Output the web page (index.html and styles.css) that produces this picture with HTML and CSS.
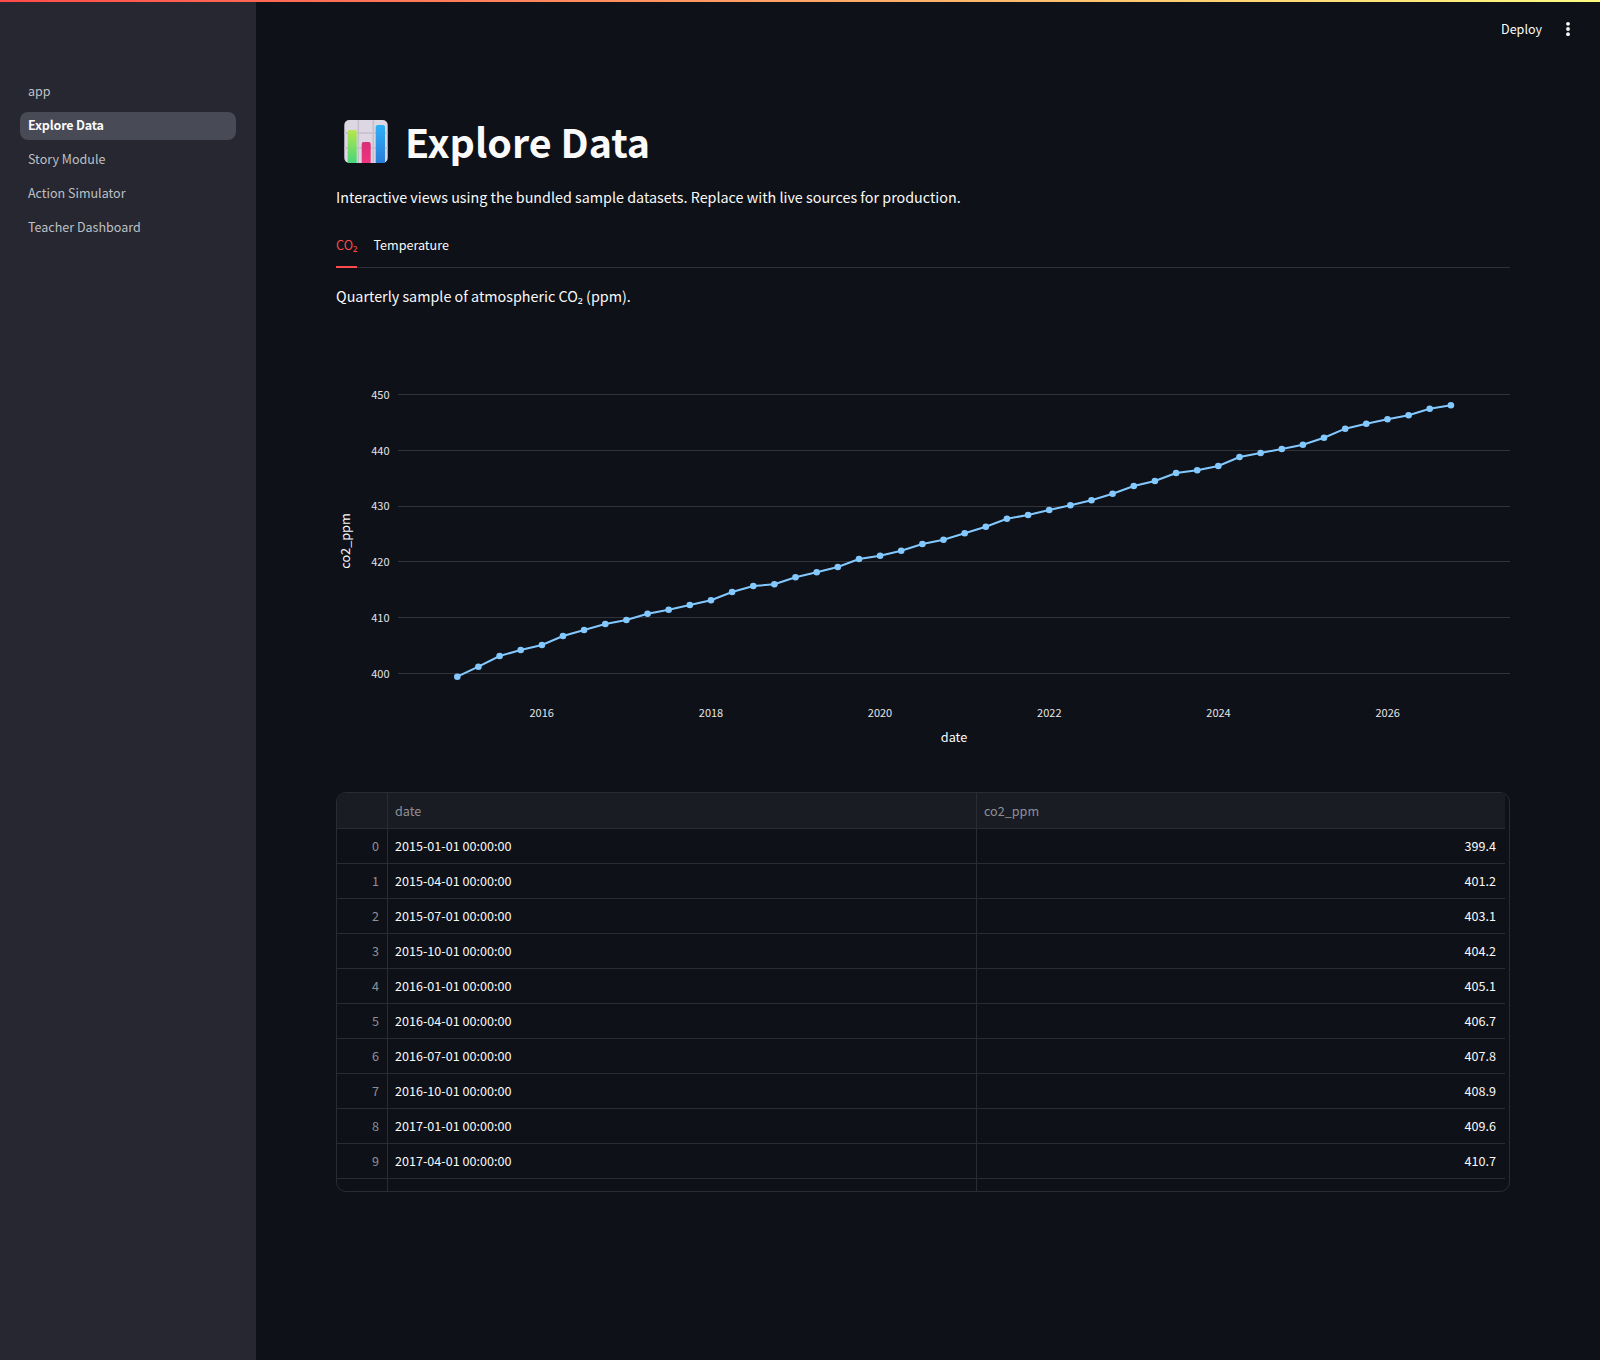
FILE: index.html
```html
<!DOCTYPE html>
<html lang="en">
<head>
<meta charset="utf-8">
<title>Explore Data</title>
<link rel="stylesheet" href="styles.css">
</head>
<body>
<div class="topbar"></div>
<div class="app">
  <aside class="sidebar">
    <nav class="nav">
      <a class="nav-item">app</a>
      <a class="nav-item active">Explore Data</a>
      <a class="nav-item">Story Module</a>
      <a class="nav-item">Action Simulator</a>
      <a class="nav-item">Teacher Dashboard</a>
    </nav>
  </aside>
  <main class="main">
    <header class="toolbar">
      <span class="deploy">Deploy</span>
      <svg class="kebab" width="16" height="16" viewBox="0 0 16 16" aria-hidden="true"><circle cx="8" cy="2.8" r="1.9"/><circle cx="8" cy="8" r="1.9"/><circle cx="8" cy="13.2" r="1.9"/></svg>
    </header>
    <section class="content">
      <div class="title-row">
        <svg class="emoji" width="44" height="44" viewBox="0 0 44 44" aria-hidden="true">
          <defs>
            <linearGradient id="gG" x1="0" y1="0" x2="0" y2="1"><stop offset="0" stop-color="#b9e64c"/><stop offset="1" stop-color="#45d67c"/></linearGradient>
            <linearGradient id="gP" x1="0" y1="0" x2="0" y2="1"><stop offset="0" stop-color="#d92f78"/><stop offset="1" stop-color="#f0347f"/></linearGradient>
            <linearGradient id="gB" x1="0" y1="0" x2="0" y2="1"><stop offset="0" stop-color="#2fb0f8"/><stop offset="1" stop-color="#2a7dd8"/></linearGradient>
          </defs>
          <rect x="0.3" y="0" width="43.4" height="43" rx="5" fill="#dcd7e2"/>
          <path d="M14.3 0V43M29.3 0V43M0.3 13H43.7M0.3 28H43.7" stroke="#c4bfcb" stroke-width="1.6" fill="none"/>
          <path d="M3.7 43V12a2 2 0 0 1 2-2h5a2 2 0 0 1 2 2V43z" fill="url(#gG)"/>
          <path d="M17.7 43V24a2 2 0 0 1 2-2h5a2 2 0 0 1 2 2V43z" fill="url(#gP)"/>
          <path d="M31.7 43V7a2 2 0 0 1 2-2h5.3a2 2 0 0 1 2 2V43z" fill="url(#gB)"/>
        </svg>
        <h1 class="title">Explore Data</h1>
      </div>
      <p class="lead">Interactive views using the bundled sample datasets. Replace with live sources for production.</p>
      <div class="tabs">
        <span class="tab selected">CO₂</span>
        <span class="tab">Temperature</span>
      </div>
      <p class="caption">Quarterly sample of atmospheric CO₂ (ppm).</p>
      <svg class="chart" width="1174" height="440" viewBox="336 340 1174 440" role="img" aria-label="CO2 line chart">
        <g class="grid">
          <line x1="398" x2="1510" y1="394.5" y2="394.5"/>
          <line x1="398" x2="1510" y1="450.5" y2="450.5"/>
          <line x1="398" x2="1510" y1="506.5" y2="506.5"/>
          <line x1="398" x2="1510" y1="561.5" y2="561.5"/>
          <line x1="398" x2="1510" y1="617.5" y2="617.5"/>
          <line x1="398" x2="1510" y1="673.5" y2="673.5"/>
        </g>
        <g class="ticks-y">
          <text x="389.5" y="399">450</text>
          <text x="389.5" y="455">440</text>
          <text x="389.5" y="510">430</text>
          <text x="389.5" y="566">420</text>
          <text x="389.5" y="622">410</text>
          <text x="389.5" y="678">400</text>
        </g>
        <g class="ticks-x">
          <text x="541.7" y="717">2016</text>
          <text x="711" y="717">2018</text>
          <text x="880" y="717">2020</text>
          <text x="1049.3" y="717">2022</text>
          <text x="1218.5" y="717">2024</text>
          <text x="1387.7" y="717">2026</text>
        </g>
        <text class="axis-title" x="954" y="742">date</text>
        <text class="axis-title" transform="translate(350 541) rotate(-90)">co2_ppm</text>
        <polyline class="line" points="457.3,676.7 478.4,666.7 499.6,656 520.7,650 541.9,645 563,636 584.1,630 605.3,624 626.4,620 647.6,613.7 668.7,609.7 689.8,605 711,600.3 732.1,592 753.3,586 774.4,584.3 795.5,577.3 816.7,572.3 837.8,567 859,559 880.1,555.7 901.2,550.7 922.4,544 943.5,539.7 964.7,533.3 985.8,526.7 1006.9,518.7 1028.1,515 1049.2,510 1070.4,505.3 1091.5,500.3 1112.6,493.7 1133.8,486 1154.9,481 1176.1,473 1197.2,470.3 1218.3,466 1239.5,457 1260.6,453 1281.8,449 1302.9,444.7 1324,437.7 1345.2,428.7 1366.3,423.7 1387.5,419.3 1408.6,415.3 1429.7,408.7 1450.9,405.3"/>
        <g class="dots">
          <circle cx="457.3" cy="676.7" r="3.3"/><circle cx="478.4" cy="666.7" r="3.3"/><circle cx="499.6" cy="656" r="3.3"/><circle cx="520.7" cy="650" r="3.3"/><circle cx="541.9" cy="645" r="3.3"/><circle cx="563" cy="636" r="3.3"/><circle cx="584.1" cy="630" r="3.3"/><circle cx="605.3" cy="624" r="3.3"/><circle cx="626.4" cy="620" r="3.3"/><circle cx="647.6" cy="613.7" r="3.3"/><circle cx="668.7" cy="609.7" r="3.3"/><circle cx="689.8" cy="605" r="3.3"/><circle cx="711" cy="600.3" r="3.3"/><circle cx="732.1" cy="592" r="3.3"/><circle cx="753.3" cy="586" r="3.3"/><circle cx="774.4" cy="584.3" r="3.3"/><circle cx="795.5" cy="577.3" r="3.3"/><circle cx="816.7" cy="572.3" r="3.3"/><circle cx="837.8" cy="567" r="3.3"/><circle cx="859" cy="559" r="3.3"/><circle cx="880.1" cy="555.7" r="3.3"/><circle cx="901.2" cy="550.7" r="3.3"/><circle cx="922.4" cy="544" r="3.3"/><circle cx="943.5" cy="539.7" r="3.3"/><circle cx="964.7" cy="533.3" r="3.3"/><circle cx="985.8" cy="526.7" r="3.3"/><circle cx="1006.9" cy="518.7" r="3.3"/><circle cx="1028.1" cy="515" r="3.3"/><circle cx="1049.2" cy="510" r="3.3"/><circle cx="1070.4" cy="505.3" r="3.3"/><circle cx="1091.5" cy="500.3" r="3.3"/><circle cx="1112.6" cy="493.7" r="3.3"/><circle cx="1133.8" cy="486" r="3.3"/><circle cx="1154.9" cy="481" r="3.3"/><circle cx="1176.1" cy="473" r="3.3"/><circle cx="1197.2" cy="470.3" r="3.3"/><circle cx="1218.3" cy="466" r="3.3"/><circle cx="1239.5" cy="457" r="3.3"/><circle cx="1260.6" cy="453" r="3.3"/><circle cx="1281.8" cy="449" r="3.3"/><circle cx="1302.9" cy="444.7" r="3.3"/><circle cx="1324" cy="437.7" r="3.3"/><circle cx="1345.2" cy="428.7" r="3.3"/><circle cx="1366.3" cy="423.7" r="3.3"/><circle cx="1387.5" cy="419.3" r="3.3"/><circle cx="1408.6" cy="415.3" r="3.3"/><circle cx="1429.7" cy="408.7" r="3.3"/><circle cx="1450.9" cy="405.3" r="3.3"/>
        </g>
      </svg>
      <div class="table">
        <div class="row head"><div class="cell idx"></div><div class="cell">date</div><div class="cell">co2_ppm</div></div>
        <div class="row"><div class="cell idx">0</div><div class="cell">2015-01-01 00:00:00</div><div class="cell num">399.4</div></div>
        <div class="row"><div class="cell idx">1</div><div class="cell">2015-04-01 00:00:00</div><div class="cell num">401.2</div></div>
        <div class="row"><div class="cell idx">2</div><div class="cell">2015-07-01 00:00:00</div><div class="cell num">403.1</div></div>
        <div class="row"><div class="cell idx">3</div><div class="cell">2015-10-01 00:00:00</div><div class="cell num">404.2</div></div>
        <div class="row"><div class="cell idx">4</div><div class="cell">2016-01-01 00:00:00</div><div class="cell num">405.1</div></div>
        <div class="row"><div class="cell idx">5</div><div class="cell">2016-04-01 00:00:00</div><div class="cell num">406.7</div></div>
        <div class="row"><div class="cell idx">6</div><div class="cell">2016-07-01 00:00:00</div><div class="cell num">407.8</div></div>
        <div class="row"><div class="cell idx">7</div><div class="cell">2016-10-01 00:00:00</div><div class="cell num">408.9</div></div>
        <div class="row"><div class="cell idx">8</div><div class="cell">2017-01-01 00:00:00</div><div class="cell num">409.6</div></div>
        <div class="row"><div class="cell idx">9</div><div class="cell">2017-04-01 00:00:00</div><div class="cell num">410.7</div></div>
        <div class="row partial"><div class="cell idx"></div><div class="cell"></div><div class="cell"></div></div>
      </div>
    </section>
  </main>
</div>
</body>
</html>
```

FILE: styles.css
```css
* { box-sizing: border-box; }
html, body { margin: 0; height: 100%; }
body {
  display: flex;
  flex-direction: column;
  height: 1360px;
  overflow: hidden;
  background: #0e1117;
  color: #fafafa;
  font-family: "Noto Sans CJK SC", "Noto Sans", sans-serif;
  font-size: 14.34px;
}
.topbar {
  height: 2px;
  flex: none;
  background: linear-gradient(90deg, #ff4b4b, #fffd80);
}
.app { display: flex; flex: 1; min-height: 0; }

.sidebar {
  width: 256px;
  flex: none;
  background: #262730;
  padding: 76px 20px 0;
}
.nav { display: flex; flex-direction: column; gap: 6px; }
.nav-item {
  height: 28px;
  line-height: 26px;
  padding: 0 8px;
  border-radius: 8px;
  font-size: 12.53px;
  color: #bec0c6;
}
.nav-item.active {
  background: #484a56;
  color: #fafafa;
  font-weight: 700;
  letter-spacing: -0.17px;
}

.main { flex: 1; min-width: 0; padding: 0 90px 0 80px; }
.toolbar {
  height: 54px;
  margin-right: -90px;
  padding: 0 24px 0 0;
  display: flex;
  align-items: center;
  justify-content: flex-end;
  gap: 18px;
}
.deploy { font-size: 12.53px; color: #fafafa; padding-bottom: 2px; }
.kebab { fill: #fafafa; }

.content { display: flex; flex-direction: column; }
.title-row {
  display: flex;
  align-items: center;
  gap: 17px;
  height: 44px;
  margin: 64px 0 0 8px;
}
.emoji { flex: none; }
.title { margin: 0; padding-bottom: 3px; font-size: 39.4px; line-height: 40px; font-weight: 700; color: #fafafa; }
.lead { margin: 21px 0 0; font-size: 14.34px; line-height: 24px; }
.tabs {
  display: flex;
  gap: 16px;
  height: 42px;
  margin-top: 17px;
  border-bottom: 1px solid #2f3138;
}
.tab {
  height: 42px;
  line-height: 38px;
  font-size: 12.6px;
  color: #fafafa;
}
.tab.selected { color: #ff4b4b; border-bottom: 2px solid #ff4b4b; }
.caption { margin: 16px 0 0; font-size: 14.34px; line-height: 24px; }

.chart { display: block; margin-top: 32px; }
.grid line { stroke: #31333a; stroke-width: 1; }
.ticks-y text, .ticks-x text { font-size: 11px; fill: #e4e5e8; }
.ticks-y text { text-anchor: end; }
.ticks-x text { text-anchor: middle; }
.axis-title { font-size: 12.7px; fill: #fafafa; text-anchor: middle; }
.line { fill: none; stroke: #83c9ff; stroke-width: 2; }
.dots circle { fill: #83c9ff; }

.table {
  margin-top: 12px;
  height: 400px;
  border: 1px solid #2a2c33;
  border-radius: 10px;
  padding-right: 4px;
  overflow: hidden;
  font-size: 12.6px;
}
.row {
  display: grid;
  grid-template-columns: 51px 589px 1fr;
  height: 35px;
  border-bottom: 1px solid #2a2c33;
}
.row.head { background: #1a1c24; color: #8e9097; height: 36px; }
.row.head .cell { line-height: 36px; }
.row.partial { height: 13px; border-bottom: 0; }
.cell {
  padding: 0 8px 0 7px;
  line-height: 34px;
  border-right: 1px solid #2a2c33;
  overflow: hidden;
  white-space: nowrap;
}
.row > .cell:last-child { border-right: 0; }
.cell.idx { text-align: right; color: #8e9097; }
.cell.num { text-align: right; padding-right: 9px; }
```
